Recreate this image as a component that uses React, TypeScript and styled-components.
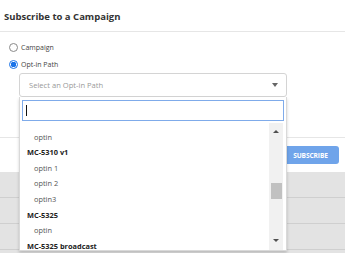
import React from "react";
import styled, { createGlobalStyle } from "styled-components";

const GlobalStyle = createGlobalStyle`
    html, body {
        margin: 0;
        padding: 0;
        background: #ffffff;
        font-family: "Open Sans", "Noto Sans", sans-serif;
    }
`;

interface OptionItem {
    label: string;
    group?: boolean;
}

const options: OptionItem[] = [
    { label: "optin" },
    { label: "MC-5310 v1", group: true },
    { label: "optin 1" },
    { label: "optin 2" },
    { label: "optin3" },
    { label: "MC-5325", group: true },
    { label: "optin" },
    { label: "MC-5325 broadcast", group: true },
];

export default function App() {
    return (
        <>
            <GlobalStyle />
            <Screen>
                <Modal>
                    <Header>
                        <Title>Subscribe to a Campaign</Title>
                    </Header>
                    <Body>
                        <RadioRow>
                            <Radio />
                            <RadioLabel>Campaign</RadioLabel>
                        </RadioRow>
                        <RadioRow>
                            <Radio checked />
                            <RadioLabel>Opt-in Path</RadioLabel>
                        </RadioRow>
                        <SelectWrap>
                            <SelectBox>
                                <Placeholder>Select an Opt-in Path</Placeholder>
                                <Caret />
                            </SelectBox>
                            <Dropdown>
                                <SearchBox>
                                    <TextCursor />
                                </SearchBox>
                                <ListArea>
                                    <List>
                                        {options.map((o, i) => (
                                            <Item key={i} group={o.group}>
                                                {o.label}
                                            </Item>
                                        ))}
                                    </List>
                                    <ScrollBar>
                                        <ArrowUp />
                                        <Track>
                                            <Thumb />
                                        </Track>
                                        <ArrowDown />
                                    </ScrollBar>
                                </ListArea>
                            </Dropdown>
                        </SelectWrap>
                    </Body>
                    <Footer>
                        <SubscribeButton>SUBSCRIBE</SubscribeButton>
                    </Footer>
                </Modal>
                <PageBehind>
                    <PageRow />
                    <PageRow />
                    <PageRow />
                </PageBehind>
            </Screen>
        </>
    );
}

const Screen = styled.div`
    width: 345px;
    height: 253px;
    overflow: hidden;
    display: flex;
    flex-direction: column;
    background: #e3e3e3;
`;

const Modal = styled.div`
    background: #ffffff;
    display: flex;
    flex-direction: column;
`;

const Header = styled.div`
    height: 31px;
    display: flex;
    align-items: center;
    padding-left: 4px;
    border-bottom: 1px solid #e6e6e6;
`;

const Title = styled.div`
    font-size: 9.5px;
    font-weight: 700;
    color: #333333;
    margin-top: 1px;
`;

const Body = styled.div`
    height: 105px;
    padding: 11px 0 0 9px;
    box-sizing: border-box;
    display: flex;
    flex-direction: column;
`;

const RadioRow = styled.div`
    display: flex;
    align-items: center;
    gap: 3px;
    height: 9px;

    & + & {
        margin-top: 7.6px;
    }
`;

const Radio = styled.span<{ checked?: boolean }>`
    width: 9px;
    height: 9px;
    box-sizing: border-box;
    border-radius: 50%;
    border: 1px solid ${(p) => (p.checked ? "#1a73e8" : "#8a8a8a")};
    background: ${(p) => (p.checked ? "radial-gradient(circle, #1a73e8 0 2.6px, #ffffff 3px)" : "#ffffff")};
`;

const RadioLabel = styled.span`
    font-size: 7px;
    color: #444444;
    line-height: 9px;
`;

const SelectWrap = styled.div`
    position: relative;
    margin: 4px 0 0 10px;
    width: 268px;
`;

const SelectBox = styled.div`
    height: 24px;
    box-sizing: border-box;
    border: 1px solid #d4d4d4;
    border-radius: 3px;
    display: flex;
    align-items: center;
    justify-content: space-between;
    padding: 0 8px 0 9px;
`;

const Placeholder = styled.span`
    font-size: 7.6px;
    color: #999999;
`;

const Caret = styled.span`
    width: 0;
    height: 0;
    border-left: 3.5px solid transparent;
    border-right: 3.5px solid transparent;
    border-top: 4px solid #666666;
`;

const Dropdown = styled.div`
    position: absolute;
    left: 0;
    top: 24px;
    width: 268px;
    height: 154px;
    box-sizing: border-box;
    background: #ffffff;
    border: 1px solid #d9d9d9;
    border-top: none;
    box-shadow: 0 2px 3px rgba(0, 0, 0, 0.18);
    padding: 3px 2px 0 2px;
    display: flex;
    flex-direction: column;
`;

const SearchBox = styled.div`
    height: 21px;
    box-sizing: border-box;
    border: 1px solid #7fabea;
    display: flex;
    align-items: center;
    padding-left: 3px;
`;

const TextCursor = styled.span`
    width: 1px;
    height: 11px;
    background: #111111;
`;

const ListArea = styled.div`
    flex: 1;
    display: flex;
    margin-top: 2px;
    overflow: hidden;
`;

const List = styled.div`
    flex: 1;
    padding-top: 7px;
`;

const Item = styled.div<{ group?: boolean }>`
    height: 15.6px;
    line-height: 15.6px;
    font-size: 7.4px;
    white-space: nowrap;
    padding-left: ${(p) => (p.group ? "5px" : "12px")};
    font-weight: ${(p) => (p.group ? 700 : 400)};
    color: ${(p) => (p.group ? "#222222" : "#555555")};
`;

const ScrollBar = styled.div`
    width: 14px;
    background: #f1f1f1;
    display: flex;
    flex-direction: column;
    align-items: center;
    margin-right: 1px;
`;

const ArrowUp = styled.span`
    margin-top: 7px;
    width: 0;
    height: 0;
    border-left: 3.5px solid transparent;
    border-right: 3.5px solid transparent;
    border-bottom: 3.5px solid #505050;
`;

const ArrowDown = styled.span`
    margin-bottom: 8px;
    width: 0;
    height: 0;
    border-left: 3.5px solid transparent;
    border-right: 3.5px solid transparent;
    border-top: 3.5px solid #505050;
`;

const Track = styled.div`
    flex: 1;
    width: 100%;
    display: flex;
    justify-content: center;
    padding-top: 50px;
    box-sizing: border-box;
`;

const Thumb = styled.div`
    width: 11px;
    height: 16px;
    background: #c1c1c1;
`;

const Footer = styled.div`
    height: 35px;
    box-sizing: border-box;
    border-top: 1px solid #e6e6e6;
    display: flex;
    align-items: center;
    justify-content: flex-end;
    padding-right: 6px;
`;

const SubscribeButton = styled.div`
    width: 57px;
    height: 18px;
    border-radius: 3px;
    background: #6fa4ea;
    color: #ffffff;
    font-size: 6.6px;
    font-weight: 700;
    display: flex;
    align-items: center;
    justify-content: center;
    letter-spacing: -0.1px;
`;

const PageBehind = styled.div`
    flex: 1;
    display: flex;
    flex-direction: column;
`;

const PageRow = styled.div`
    height: 25px;
    border-bottom: 1px solid #cfcfcf;
    background: #e3e3e3;
`;
